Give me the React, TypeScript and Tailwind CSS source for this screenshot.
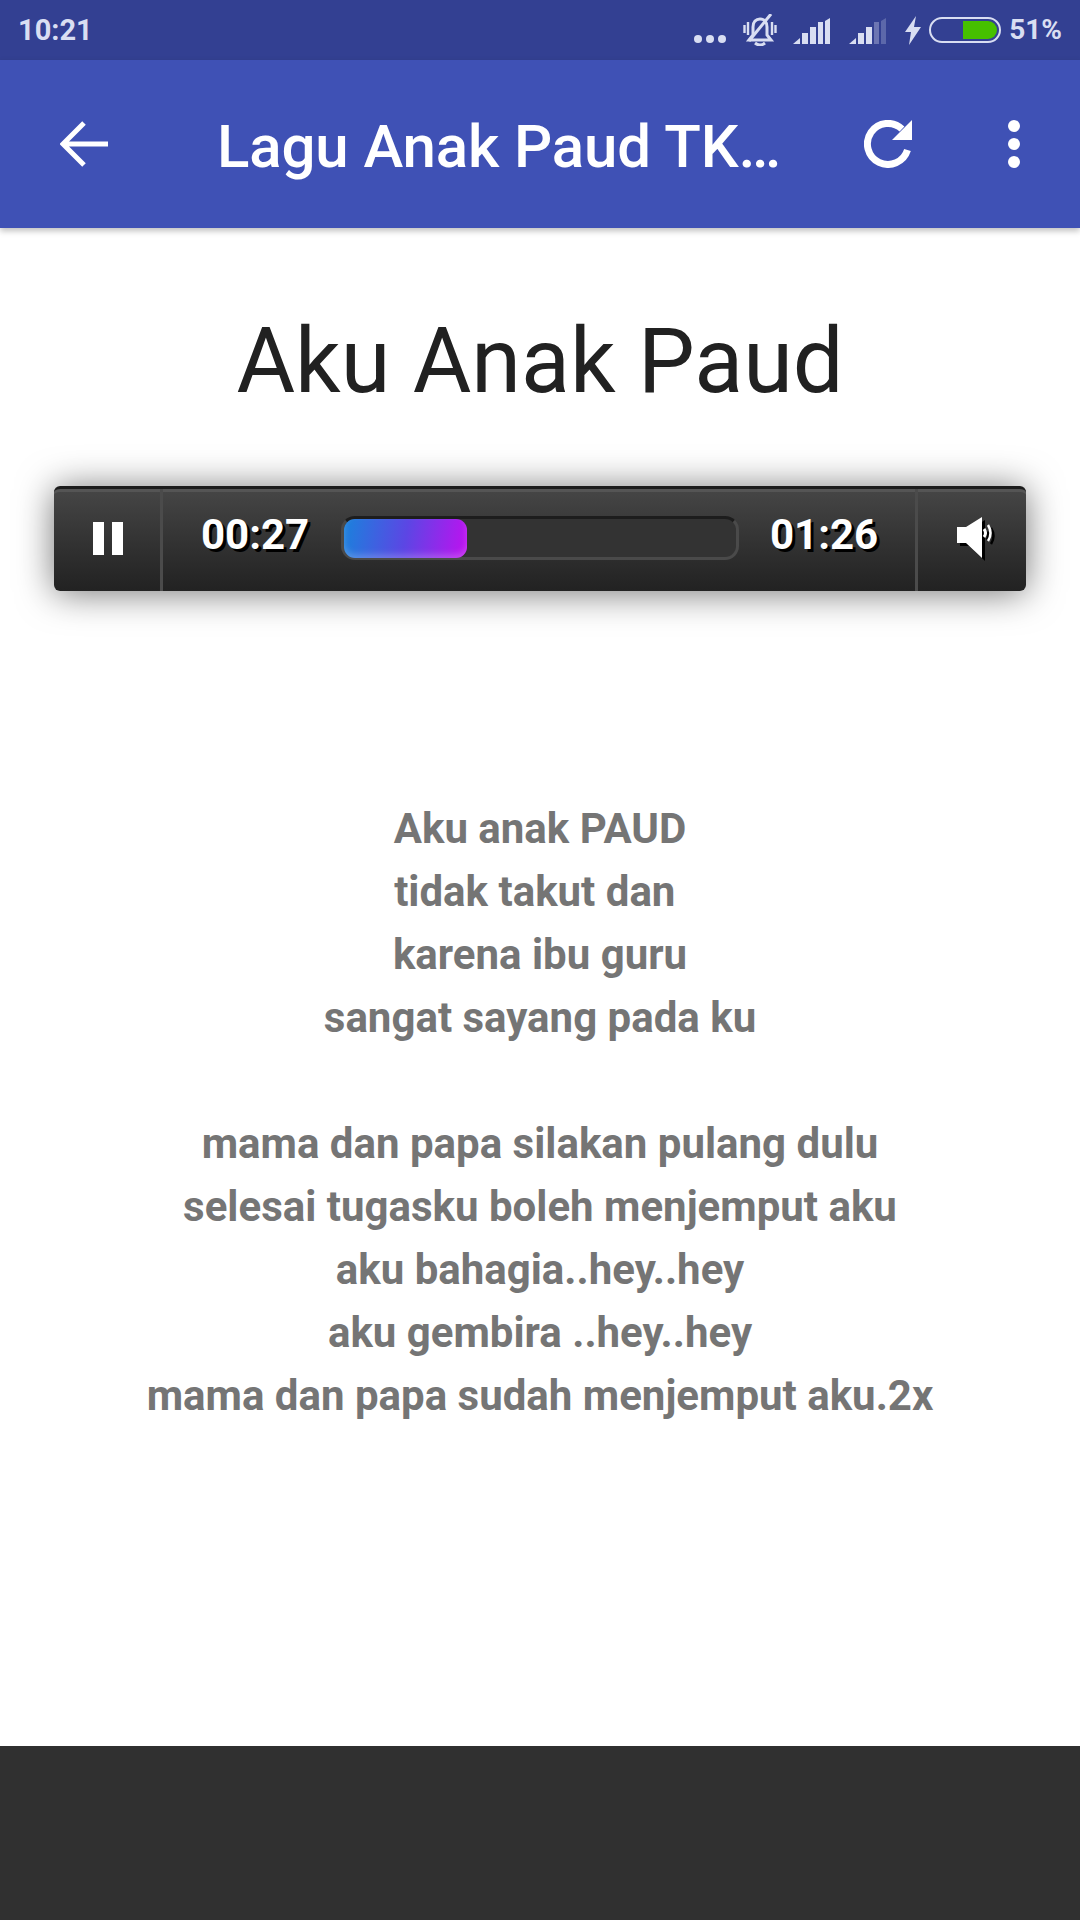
const lyrics = [
  "Aku anak PAUD",
  "tidak takut dan ",
  "karena ibu guru",
  "sangat sayang pada ku",
  "",
  "mama dan papa silakan pulang dulu",
  "selesai tugasku boleh menjemput aku",
  "aku bahagia..hey..hey",
  "aku gembira ..hey..hey",
  "mama dan papa sudah menjemput aku.2x",
];

function SignalBars({ faded }: { faded?: boolean }) {
  return (
    <svg width="38" height="26" viewBox="0 0 38 26" className="text-[#d9def2]">
      <path d="M0 26 L7 20 V26 Z" fill="currentColor" />
      <rect x="9" y="15" width="6" height="11" fill="currentColor" />
      <rect x="17" y="9" width="6" height="17" fill="currentColor" />
      <rect x="25" y="4" width="5" height="22" fill="currentColor" opacity={faded ? 0.35 : 1} />
      <path d="M32 3 L37 0 V26 H32 Z" fill="currentColor" opacity={faded ? 0.25 : 1} />
    </svg>
  );
}

function StatusBar() {
  return (
    <div className="flex h-[60px] items-center justify-between bg-[#334092] pl-[18px] pr-[18px] text-[#d9def2]">
      <span className="text-[29px] font-bold leading-none">10:21</span>
      <div className="flex items-center">
        <div className="mt-[17px] flex gap-[4px]">
          <span className="h-[8px] w-[8px] rounded-full bg-[#d9def2]" />
          <span className="h-[8px] w-[8px] rounded-full bg-[#d9def2]" />
          <span className="h-[8px] w-[8px] rounded-full bg-[#d9def2]" />
        </div>
        <svg width="34" height="32" viewBox="0 0 34 32" fill="none" stroke="currentColor" className="ml-[17px]">
          <path d="M6 26 L10 21 V13 C10 8 13 5 17 5 C21 5 24 8 24 13 V21 L28 26 Z" strokeWidth="3" />
          <path d="M12 29 Q17 33 22 29" strokeWidth="3" />
          <path d="M6 27 L28 0" strokeWidth="3" />
          <path d="M1.5 11 V19 M5 8 V21 M29 8 V21 M32.5 11 V19" strokeWidth="2.4" />
        </svg>
        <div className="ml-[16px] mt-[1px]">
          <SignalBars />
        </div>
        <div className="ml-[18px] mt-[1px]">
          <SignalBars faded />
        </div>
        <svg width="16" height="29" viewBox="0 0 16 29" className="ml-[18px]" fill="currentColor">
          <path d="M11 0 L0 16 H6 L4 29 L16 11 H9 Z" />
        </svg>
        <div className="ml-[8px] flex h-[26px] w-[72px] items-center justify-end rounded-full border-2 border-[#d9def2] p-[2px]">
          <div className="h-[18px] w-[34px] rounded-r-full bg-[#46c000]" />
        </div>
        <span className="ml-[8px] text-[28px] font-bold leading-none">51%</span>
      </div>
    </div>
  );
}

function Toolbar() {
  return (
    <div className="relative flex h-[168px] items-center bg-[#3f51b5] shadow-[0_3px_6px_rgba(0,0,0,0.25)]">
      <svg width="48" height="48" viewBox="0 0 48 48" fill="none" stroke="white" strokeWidth="5" className="ml-[60px]">
        <path d="M48 24 H3 M24 3 L3 24 L24 45" />
      </svg>
      <span className="ml-[109px] mt-[5px] w-[647px] text-[60px] font-medium leading-none tracking-[-0.13px] text-white">Lagu Anak Paud TK…</span>
      <svg width="48" height="48" viewBox="0 0 48 48" fill="none">
        <path d="M43.5 30 A20.5 20.5 0 1 1 38 9" stroke="white" strokeWidth="7" />
        <path d="M48 0 V20 H28 Z" fill="white" />
      </svg>
      <div className="ml-[96px] flex flex-col gap-[6px]">
        <span className="h-[12px] w-[12px] rounded-full bg-white" />
        <span className="h-[12px] w-[12px] rounded-full bg-white" />
        <span className="h-[12px] w-[12px] rounded-full bg-white" />
      </div>
    </div>
  );
}

function Player() {
  const timeClass = "w-[105px] shrink-0 whitespace-nowrap text-[42px] font-bold leading-none text-white [text-shadow:3px_3px_0_#000]";
  return (
    <div className="mx-[54px] mt-[70px] flex h-[105px] rounded-[6px] border-t-[3px] border-[#1c1c1c] bg-gradient-to-b from-[#464646] to-[#222222] shadow-[inset_0_3px_0_#555555,0_2px_36px_rgba(0,0,0,0.55)]">
      <div className="flex w-[109px] shrink-0 items-center justify-center border-r-[3px] border-[#4b4b4b] pb-[3px] pl-[2px]">
        <div className="flex gap-[8px]">
          <span className="h-[33px] w-[11px] bg-white" />
          <span className="h-[33px] w-[11px] bg-white" />
        </div>
      </div>
      <div className="flex flex-1 items-center pb-[4px]">
        <span className={`ml-[38px] mb-[6px] ${timeClass}`}>00:27</span>
        <div className="ml-[35px] h-[44px] w-[398px] shrink-0 rounded-[14px] border-x-[3px] border-b-[3px] border-t-[3px] border-x-[#4a4a4a] border-t-[#1d1d1d] border-b-[#4a4a4a] bg-[#333333]">
          <div className="h-[39px] w-[123px] rounded-[11px] bg-[linear-gradient(100deg,#1a82dc,#5c46e4_50%,#c010f0)] shadow-[inset_0_-4px_6px_rgba(255,255,255,0.2)]" />
        </div>
        <span className={`ml-[31px] mb-[6px] ${timeClass}`}>01:26</span>
      </div>
      <div className="flex w-[111px] shrink-0 items-center justify-center border-l-[3px] border-[#4b4b4b] pb-[4px] pl-[6px]">
        <svg width="36" height="42" viewBox="0 0 36 42" className="drop-shadow-[3px_3px_0_#000]">
          <path d="M0 10 H9 L25 0 V41 L9 26 H0 Z" fill="white" />
          <path d="M27 12 Q30 16 27 20" stroke="white" strokeWidth="3" fill="none" />
          <path d="M31 8 Q36 16 31 24" stroke="white" strokeWidth="2.5" fill="none" />
        </svg>
      </div>
    </div>
  );
}

export default function App() {
  return (
    <div className="flex h-[1920px] w-[1080px] flex-col bg-white font-['Roboto',sans-serif]">
      <StatusBar />
      <Toolbar />
      <h1 className="mt-[83px] h-[105px] text-center text-[90px] font-normal leading-[101px] text-[#212121]">Aku Anak Paud</h1>
      <Player />
      <div className="mt-[206px] flex-1 text-center text-[42px] font-bold leading-[63px] text-[#757575]">
        {lyrics.map((line, i) => (
          <div key={i} className="h-[63px] whitespace-pre">{line}</div>
        ))}
      </div>
      <div className="h-[174px] bg-[#303030]" />
    </div>
  );
}
